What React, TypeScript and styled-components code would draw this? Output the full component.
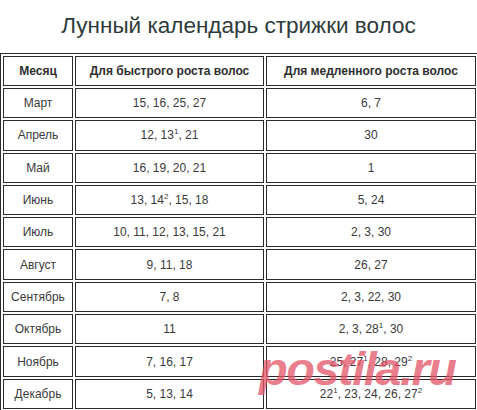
import React from 'react';
import styled, { createGlobalStyle } from 'styled-components';

const GlobalStyle = createGlobalStyle`
  html, body {
    margin: 0;
    padding: 0;
    background: #fff;
    overflow: hidden;
  }
  body {
    font-family: "Liberation Sans", Arial, sans-serif;
  }
`;

const Page = styled.div`
  position: relative;
  width: 477px;
  height: 410px;
  overflow: hidden;
`;

const Title = styled.h1`
  margin: 0 0 14px;
  padding-top: 13px;
  font-size: 22.5px;
  line-height: 26px;
  font-weight: normal;
  color: #2d3b3b;
  text-align: center;
  white-space: nowrap;
`;

const Table = styled.table`
  border: 1px solid #2a2a2a;
  border-spacing: 2px;
  table-layout: fixed;
  width: 479px;
  font-size: 12px;
`;

const HeadCell = styled.th<{ $w: number }>`
  width: ${(p) => p.$w - 2}px;
  height: 28px;
  padding: 0;
  border: 1px solid #2a2a2a;
  font-weight: bold;
  color: #2e2e2e;
  text-align: center;
  vertical-align: middle;
  white-space: nowrap;
`;

const Cell = styled.td`
  height: 28.3px;
  padding: 0;
  border: 1px solid #2a2a2a;
  color: #3a3a3a;
  text-align: center;
  vertical-align: middle;
  white-space: nowrap;
`;

const Sup = styled.sup`
  font-size: 8px;
  vertical-align: 5px;
  line-height: 0;
`;

const Watermark = styled.div`
  position: absolute;
  left: 259px;
  top: 345px;
  font-family: "Liberation Sans", Arial, sans-serif;
  font-size: 47px;
  line-height: 47px;
  font-weight: bold;
  font-style: italic;
  letter-spacing: -1.5px;
  color: rgba(226, 84, 104, 0.75);
  pointer-events: none;
`;

type Part = string | [string, string];

const rows: { month: string; fast: Part[]; slow: Part[] }[] = [
  { month: 'Март', fast: ['15, 16, 25, 27'], slow: ['6, 7'] },
  { month: 'Апрель', fast: ['12, ', ['13', '1'], ', 21'], slow: ['30'] },
  { month: 'Май', fast: ['16, 19, 20, 21'], slow: ['1'] },
  { month: 'Июнь', fast: ['13, ', ['14', '2'], ', 15, 18'], slow: ['5, 24'] },
  { month: 'Июль', fast: ['10, 11, 12, 13, 15, 21'], slow: ['2, 3, 30'] },
  { month: 'Август', fast: ['9, 11, 18'], slow: ['26, 27'] },
  { month: 'Сентябрь', fast: ['7, 8'], slow: ['2, 3, 22, 30'] },
  { month: 'Октябрь', fast: ['11'], slow: ['2, 3, ', ['28', '1'], ', 30'] },
  { month: 'Ноябрь', fast: ['7, 16, 17'], slow: ['25, ', ['27', '1'], ', 28, ', ['29', '2']] },
  { month: 'Декабрь', fast: ['5, 13, 14'], slow: [['22', '1'], ', 23, 24, 26, ', ['27', '2']] },
];

function Days({ parts }: { parts: Part[] }) {
  return (
    <>
      {parts.map((p, i) => (typeof p === 'string'
        ? <React.Fragment key={i}>{p}</React.Fragment>
        : <React.Fragment key={i}>{p[0]}<Sup>{p[1]}</Sup></React.Fragment>))}
    </>
  );
}

export default function App() {
  return (
    <Page>
      <GlobalStyle />
      <Title>Лунный календарь стрижки волос</Title>
      <Table>
        <thead>
          <tr>
            <HeadCell $w={70}>Месяц</HeadCell>
            <HeadCell $w={189}>Для быстрого роста волос</HeadCell>
            <HeadCell $w={210}>Для медленного роста волос</HeadCell>
          </tr>
        </thead>
        <tbody>
          {rows.map((r) => (
            <tr key={r.month}>
              <Cell>{r.month}</Cell>
              <Cell><Days parts={r.fast} /></Cell>
              <Cell><Days parts={r.slow} /></Cell>
            </tr>
          ))}
        </tbody>
      </Table>
      <Watermark>postila.ru</Watermark>
    </Page>
  );
}
